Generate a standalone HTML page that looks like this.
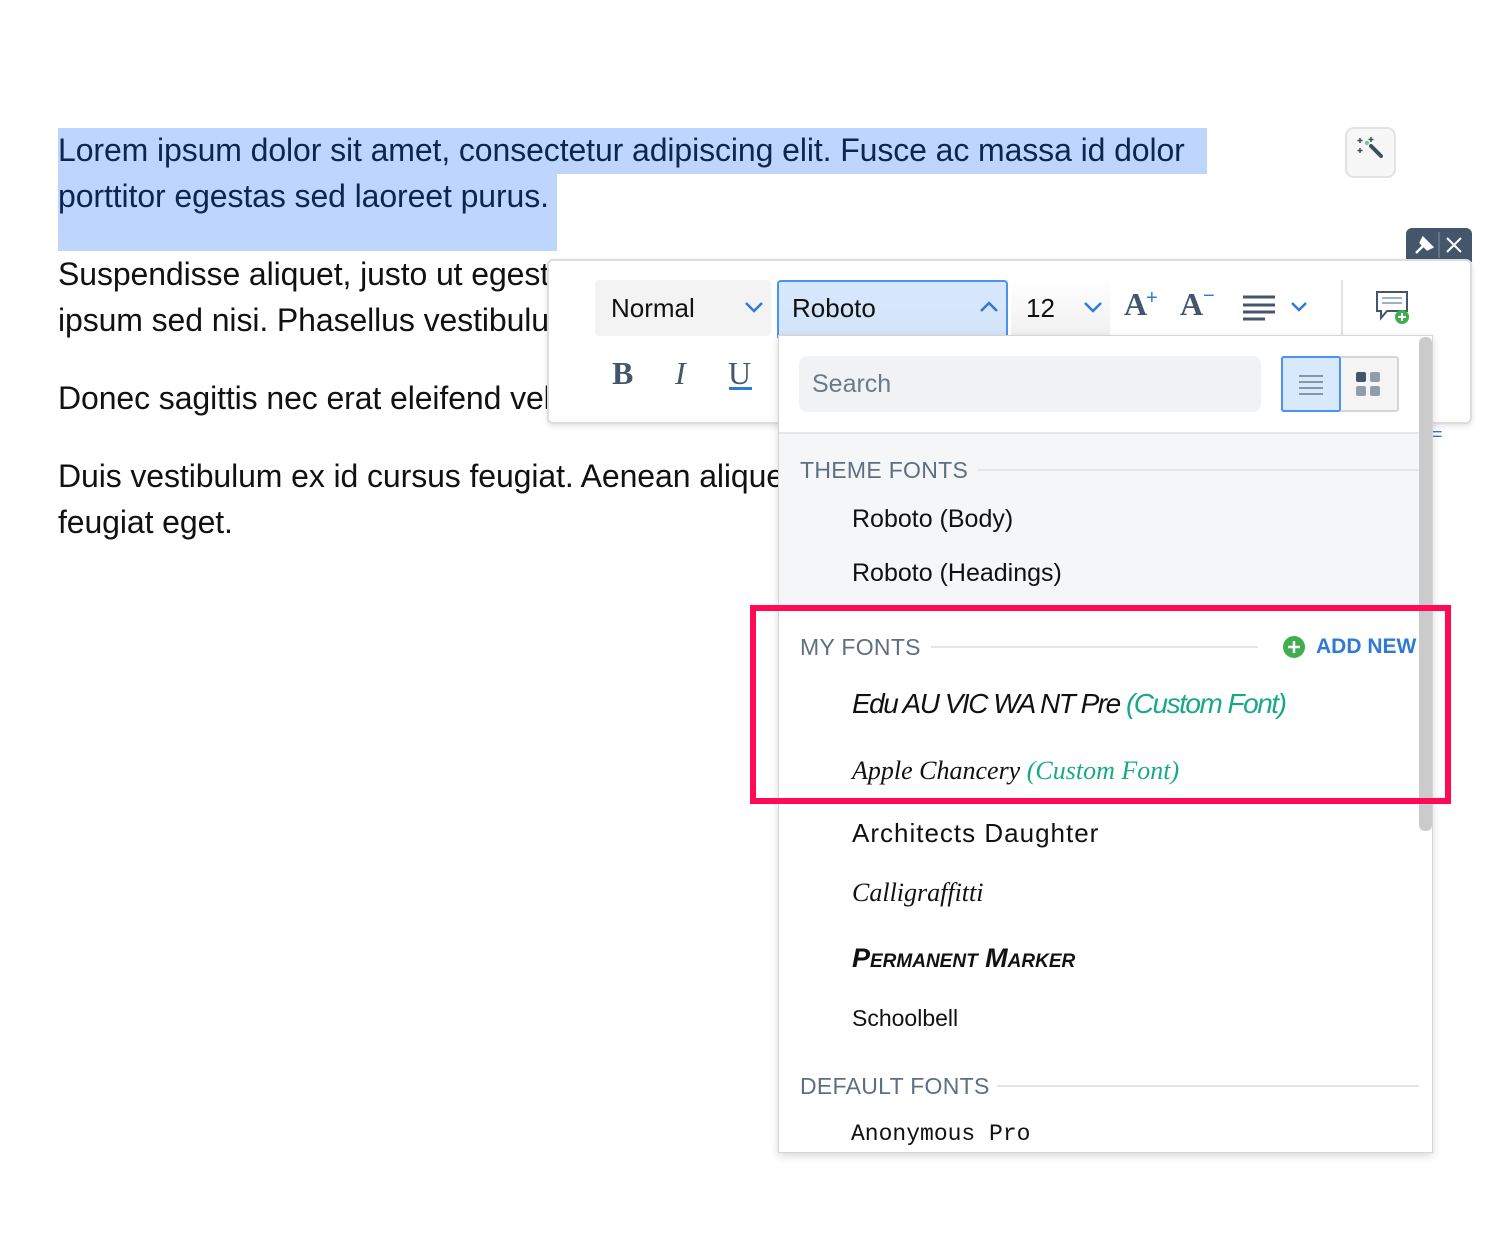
<!DOCTYPE html>
<html><head><meta charset="utf-8"><style>
*{box-sizing:border-box;margin:0;padding:0}
body{width:1490px;height:1234px;background:#fff;position:relative;font-family:"Liberation Sans",sans-serif;overflow:hidden}
.a{position:absolute}
.p{font-size:32px;color:#111;white-space:nowrap;line-height:46px;letter-spacing:-0.1px}
.sel{background:#bed6fd;color:#0c2650}
.lbl{font-size:23px;color:#5f6f82;letter-spacing:0.3px}
.item{font-size:25px;color:#111;white-space:nowrap}
.cf{color:#1aa88a}
</style></head><body>
<div class="a sel" style="left:58px;top:128px;width:1149px;height:46px"></div>
<div class="a sel" style="left:58px;top:174px;width:499px;height:77px"></div>
<div class="a p" style="left:58px;top:127px;color:#0c2650">Lorem ipsum dolor sit amet, consectetur adipiscing elit. Fusce ac massa id dolor</div>
<div class="a p" style="left:58px;top:173px;color:#0c2650">porttitor egestas sed laoreet purus.</div>
<div class="a p" style="left:58px;top:251px">Suspendisse aliquet, justo ut egestas</div>
<div class="a p" style="left:58px;top:297px">ipsum sed nisi. Phasellus vestibulum</div>
<div class="a p" style="left:58px;top:375px">Donec sagittis nec erat eleifend vel</div>
<div class="a p" style="left:58px;top:453px">Duis vestibulum ex id cursus feugiat. Aenean aliquet</div>
<div class="a p" style="left:58px;top:499px">feugiat eget.</div>

<div class="a" style="left:1345px;top:127px;width:51px;height:51px;border:2px solid #e2e2e2;border-radius:9px;background:#f7f7f7">
<svg width="47" height="47" viewBox="0 0 47 47"><path d="M24 17 L34 27" stroke="#3e4f63" stroke-width="4" stroke-linecap="round"/><circle cx="20" cy="14" r="2.2" fill="#6fd08c"/><path d="M13 9v5M10.5 11.5h5M24 8v5M21.5 10.5h5M13 19v5M10.5 21.5h5" stroke="#3e4f63" stroke-width="1.5"/></svg></div>

<div class="a" style="left:1406px;top:228px;width:66px;height:34px;background:#44566b;border-radius:6px 6px 0 0">
<svg width="66" height="34"><path d="M10 25 L17 18 M14 14 L22 22 M17 10 L26 19 L22 21 L15 14 Z" stroke="#fff" stroke-width="2.5" fill="#fff"/><line x1="33" y1="4" x2="33" y2="30" stroke="#6b7d90" stroke-width="1.5"/><path d="M41 10 L55 24 M55 10 L41 24" stroke="#fff" stroke-width="2"/></svg></div>

<div class="a" style="left:547px;top:259px;width:925px;height:165px;background:#fff;border:2px solid #ddd;border-radius:6px;box-shadow:0 2px 6px rgba(0,0,0,.12)"></div>
<div class="a" style="left:595px;top:280px;width:176px;height:56px;background:#f3f3f4;border-radius:4px"></div>
<div class="a" style="left:611px;top:293px;font-size:26px;color:#111">Normal</div>
<svg class="a" style="left:744px;top:300px" width="20" height="14"><path d="M2 3 L10 11 L18 3" stroke="#2f7ad6" stroke-width="2.5" fill="none"/></svg>
<div class="a" style="left:777px;top:280px;width:231px;height:58px;background:linear-gradient(#d8e8fd,#d3e3f8);border:2px solid #4b93f0;border-bottom:none;border-radius:4px 4px 0 0"></div>
<div class="a" style="left:792px;top:293px;font-size:26px;color:#111">Roboto</div>
<svg class="a" style="left:979px;top:300px" width="20" height="14"><path d="M2 11 L10 3 L18 11" stroke="#2f7ad6" stroke-width="2.5" fill="none"/></svg>
<div class="a" style="left:1011px;top:280px;width:99px;height:56px;background:linear-gradient(#fff,#f0f0f0)"></div>
<div class="a" style="left:1026px;top:293px;font-size:26px;color:#111">12</div>
<svg class="a" style="left:1083px;top:300px" width="20" height="14"><path d="M2 3 L10 11 L18 3" stroke="#2f7ad6" stroke-width="2.5" fill="none"/></svg>
<div class="a" style="left:1124px;top:286px;font-size:32px;color:#44566b;font-family:'Liberation Serif',serif;font-weight:bold">A</div>
<div class="a" style="left:1146px;top:287px;font-size:20px;color:#2f7ad6">+</div>
<div class="a" style="left:1180px;top:286px;font-size:32px;color:#44566b;font-family:'Liberation Serif',serif;font-weight:bold">A</div>
<div class="a" style="left:1203px;top:285px;font-size:20px;color:#2f7ad6">−</div>
<svg class="a" style="left:1242px;top:294px" width="70" height="28"><path d="M1 3h32M1 11h32M1 18h32M1 25h22" stroke="#44566b" stroke-width="3"/><path d="M50 9 L57 16 L64 9" stroke="#2f7ad6" stroke-width="2.5" fill="none"/></svg>
<div class="a" style="left:1341px;top:280px;width:2px;height:56px;background:#e3e3e3"></div>
<svg class="a" style="left:1375px;top:290px" width="36" height="36"><path d="M2 2h30v19H12l-6 7v-7H2z" stroke="#44566b" stroke-width="2" fill="#fff"/><path d="M7 8h20M7 13h20" stroke="#9fb0c0" stroke-width="2"/><circle cx="27" cy="27" r="7" fill="#3fae4c"/><path d="M23 27h8M27 23v8" stroke="#fff" stroke-width="2"/></svg>
<div class="a" style="left:612px;top:355px;font-size:32px;font-weight:bold;color:#44566b;font-family:'Liberation Serif',serif">B</div>
<div class="a" style="left:675px;top:355px;font-size:32px;font-style:italic;color:#44566b;font-family:'Liberation Serif',serif">I</div>
<div class="a" style="left:728px;top:355px;font-size:32px;color:#44566b;font-family:'Liberation Serif',serif">U</div>
<div class="a" style="left:729px;top:387px;width:23px;height:3px;background:#2f7ad6"></div>
<div class="a" style="left:1432px;top:424px;width:10px;height:16px;color:#2f7ad6;font-size:18px">=</div>

<div class="a" style="left:778px;top:335px;width:655px;height:818px;background:#fff;border:1px solid #d5d5d5;box-shadow:0 3px 8px rgba(0,0,0,.15)"></div>
<div class="a" style="left:799px;top:356px;width:462px;height:56px;background:#f1f2f4;border-radius:8px"></div>
<div class="a" style="left:812px;top:370px;font-size:25px;color:#6a7a8c">Search</div>
<div class="a" style="left:1281px;top:356px;width:118px;height:56px;border:2px solid #d5d5d5;border-radius:3px;background:#f5f5f5"></div>
<div class="a" style="left:1281px;top:356px;width:60px;height:56px;border:2px solid #4b93f0;border-radius:3px;background:#d8e8fd"></div>
<svg class="a" style="left:1298px;top:374px" width="26" height="22"><path d="M1 2h24M1 8h24M1 14h24M1 20h24" stroke="#8a96a3" stroke-width="2"/></svg>
<svg class="a" style="left:1356px;top:372px" width="26" height="26"><rect x="0" y="0" width="10" height="10" rx="2" fill="#44566b"/><rect x="14" y="0" width="10" height="10" rx="2" fill="#909dab"/><rect x="0" y="14" width="10" height="10" rx="2" fill="#909dab"/><rect x="14" y="14" width="10" height="10" rx="2" fill="#909dab"/></svg>
<div class="a" style="left:779px;top:432px;width:640px;height:173px;background:#f5f6f8;border-top:2px solid #e6e7ea"></div>
<div class="a lbl" style="left:800px;top:457px">THEME FONTS</div>
<div class="a" style="left:978px;top:469px;width:441px;height:2px;background:#e3e5e8"></div>
<div class="a item" style="left:852px;top:505px">Roboto (Body)</div>
<div class="a item" style="left:852px;top:559px">Roboto (Headings)</div>
<div class="a lbl" style="left:800px;top:634px">MY FONTS</div>
<div class="a" style="left:931px;top:646px;width:327px;height:2px;background:#e3e5e8"></div>
<svg class="a" style="left:1282px;top:635px" width="24" height="24"><circle cx="12" cy="12" r="11" fill="#3fae4c"/><path d="M6 12h12M12 6v12" stroke="#fff" stroke-width="2.5"/></svg>
<div class="a" style="left:1316px;top:635px;font-size:21px;font-weight:bold;color:#2f7ad6">ADD NEW</div>
<div class="a item" style="left:852px;top:688px;font-style:italic;font-size:28px;letter-spacing:-1.5px">Edu AU VIC WA NT Pre <span class="cf">(Custom Font)</span></div>
<div class="a item" style="left:852px;top:756px;font-family:'Liberation Serif',serif;font-style:italic;font-size:26px">Apple Chancery <span class="cf">(Custom Font)</span></div>
<div class="a item" style="left:852px;top:818px;font-size:26px;letter-spacing:1px">Architects Daughter</div>
<div class="a item" style="left:852px;top:878px;font-family:'Liberation Serif',serif;font-style:italic;font-size:26px">Calligraffitti</div>
<div class="a item" style="left:852px;top:943px;font-weight:bold;font-style:italic;font-size:27px;font-variant:small-caps">Permanent Marker</div>
<div class="a item" style="left:852px;top:1005px;font-size:23px">Schoolbell</div>
<div class="a lbl" style="left:800px;top:1073px">DEFAULT FONTS</div>
<div class="a" style="left:997px;top:1085px;width:422px;height:2px;background:#e3e5e8"></div>
<div class="a item" style="left:851px;top:1121px;font-family:'Liberation Mono',monospace;font-size:23px">Anonymous Pro</div>
<div class="a" style="left:1419px;top:337px;width:13px;height:494px;background:#cbcbcb;border-radius:6px"></div>
<div class="a" style="left:750px;top:605px;width:701px;height:199px;border:6px solid #ff0a55"></div>
</body></html>
